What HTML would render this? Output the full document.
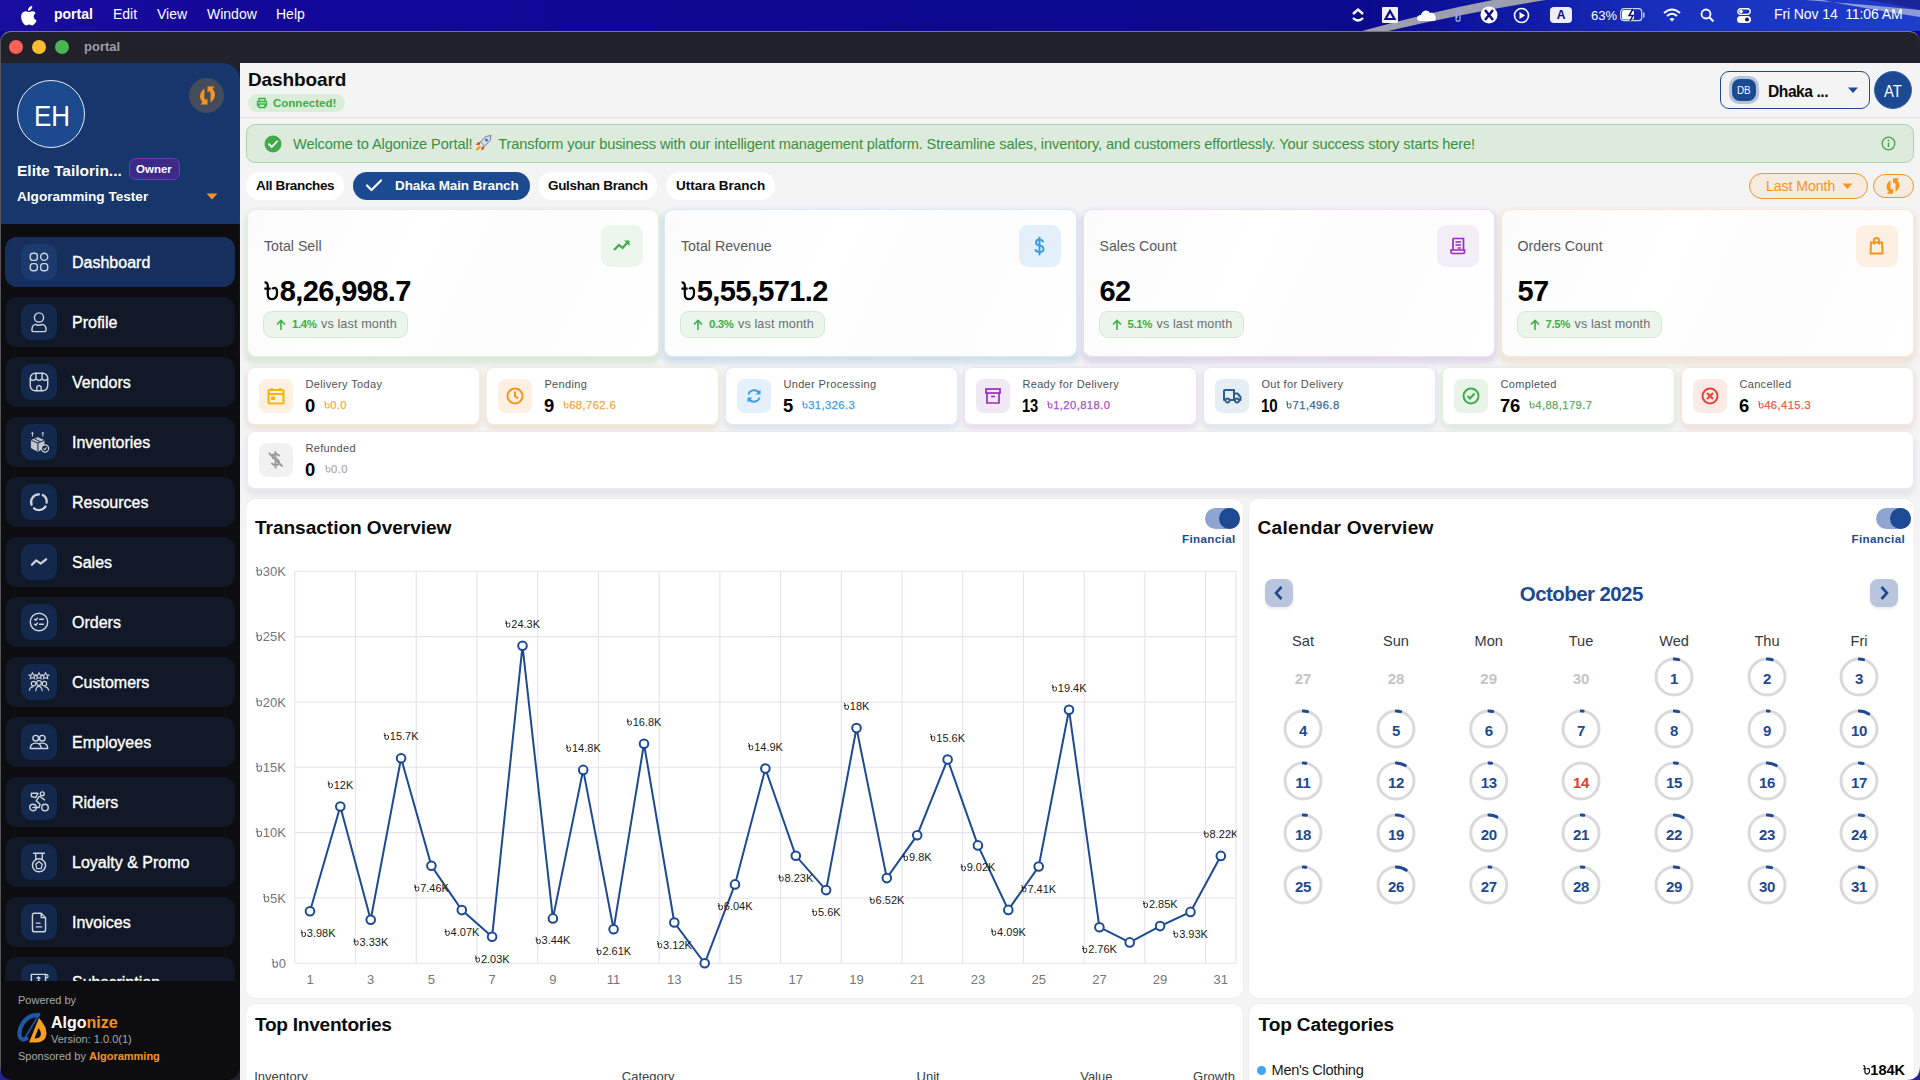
<!DOCTYPE html>
<html><head><meta charset="utf-8"><title>portal</title>
<style>
*{box-sizing:border-box;margin:0;padding:0}
html,body{width:1920px;height:1080px;overflow:hidden;font-family:"Liberation Sans",sans-serif;background:#10088c}
#root{position:relative;width:1920px;height:1080px;overflow:hidden;background:#10088c}
#root div,#root span,#root svg{position:absolute}
.nw{white-space:nowrap}
.b{font-weight:700}
.mb-t{top:6px;font-size:14px;color:#fff;white-space:nowrap;line-height:17px}
.tl{top:40px;width:14px;height:14px;border-radius:50%}
.mi{left:4px;width:230px;height:50px;border-radius:12px;background:#111827}
.mi.act{background:#172f5c}
.mi .ib{left:16px;top:7px;width:36px;height:36px;border-radius:10px;background:#12284d}
.mi.act .ib{background:#1b3a6e}
.mi .lb{left:67px;top:16px;font-size:16px;line-height:19px;color:#fff;white-space:nowrap;-webkit-text-stroke:0.35px #fff}
.mi svg{left:8px;top:8px}

</style></head><body>
<div id="root">
<div style="left:0;top:0;width:1920px;height:31px;background:linear-gradient(90deg,#1a0e9e 0%,#13089a 10%,#0d0890 50%,#0b0a8e 71%,#0f1aa3 79%,#1830bd 87%,#1d3ecb 100%)"></div>
<svg style="left:1340px;top:0" width="580" height="31" viewBox="0 0 580 31"><path d="M22 31 Q90 12 158 -1 L212 -1 Q125 13 48 31 Z" fill="#9d9fae"/><path d="M452 -1 Q520 4 580 10 L580 17 Q515 7 478 -1 Z" fill="#8f9ad6"/><path d="M520 -1 L580 -1 L580 10 Q550 3 520 -1Z" fill="#1c2596"/></svg>
<svg style="left:19px;top:6px" width="18" height="20" viewBox="0 0 18 20"><path d="M12.2 3.2c.8-1 1.3-2.2 1.1-3.4-1.1.1-2.4.7-3.2 1.7-.7.8-1.3 2-1.1 3.2 1.2.1 2.4-.6 3.2-1.5zM14.7 10.6c0-2.3 1.9-3.4 2-3.5-1.1-1.6-2.8-1.8-3.4-1.8-1.4-.1-2.8.8-3.5.8-.7 0-1.8-.8-3-.8C5.2 5.3 3.7 6.2 2.9 7.6 1.2 10.5 2.5 14.8 4.1 17.1c.8 1.1 1.7 2.4 3 2.3 1.2 0 1.6-.8 3.1-.8 1.4 0 1.8.8 3.1.8 1.3 0 2.1-1.1 2.9-2.3.9-1.3 1.3-2.6 1.3-2.7-.1 0-2.7-1-2.8-3.8z" fill="#fff"/></svg>
<span class="mb-t b" style="left:54px">portal</span>
<span class="mb-t" style="left:113px">Edit</span>
<span class="mb-t" style="left:157px">View</span>
<span class="mb-t" style="left:207px">Window</span>
<span class="mb-t" style="left:276px">Help</span>
<span class="mb-t" style="left:1591px;font-size:13px;top:7px">63%</span>
<span class="mb-t" style="left:1774px;font-size:14px;letter-spacing:-0.1px">Fri Nov 14&nbsp;&nbsp;11:06 AM</span>
<!-- status icons -->
<svg style="left:1351px;top:7px" width="14" height="17" viewBox="0 0 14 17"><path d="M2 7 L7 2.5 L12 7" stroke="#fff" stroke-width="2.4" fill="none"/><path d="M2 11 Q7 16 12 11" stroke="#fff" stroke-width="2.4" fill="none"/></svg>
<div style="left:1382px;top:7px;width:16px;height:16px;background:#f2f2f2;border-radius:1px"></div>
<svg style="left:1382px;top:7px" width="16" height="16" viewBox="0 0 16 16"><path d="M8 4 L12.5 12 L3.5 12 Z" fill="none" stroke="#10088c" stroke-width="2.2"/></svg>
<svg style="left:1417px;top:8px" width="20" height="14" viewBox="0 0 20 14"><path d="M3 13 C-1 13 -1 7 4 7 C5 2 11 1 13 5 C17 4 20 8 18 13 Z" fill="#fff"/></svg>
<svg style="left:1453px;top:7px" width="10" height="17" viewBox="0 0 10 17"><path d="M3 5 L3 12 C3 15 7 15 7 12 L7 3 C7 1 4 1 4 3 L4 11" stroke="#9aa3e0" stroke-width="1.3" fill="none"/></svg>
<svg style="left:1480px;top:6px" width="18" height="18" viewBox="0 0 18 18"><circle cx="9" cy="9" r="8.5" fill="#fff"/><path d="M5 4 L13 14 M13 4 L5 14" stroke="#10088c" stroke-width="2.4"/></svg>
<svg style="left:1513px;top:7px" width="17" height="17" viewBox="0 0 17 17"><circle cx="8.5" cy="8.5" r="7" stroke="#fff" stroke-width="1.6" fill="none"/><path d="M6.5 5 L12 8.5 L6.5 12 Z" fill="#fff"/></svg>
<div style="left:1550px;top:7px;width:22px;height:16px;background:#eeeef6;border-radius:4px;color:#10088c;font-size:12px;font-weight:700;text-align:center;line-height:16px">A</div>
<svg style="left:1620px;top:8px" width="26" height="14" viewBox="0 0 26 14"><rect x="0.7" y="0.7" width="21" height="12" rx="3" stroke="#fff" stroke-width="1.2" fill="none" opacity="0.8"/><rect x="2" y="2" width="12" height="9.5" rx="1.5" fill="#fff"/><path d="M13 1 L9 7.5 L13 7.5 L10 13" stroke="#10088c" stroke-width="1.5" fill="#fff"/><rect x="23" y="4.5" width="1.6" height="5" fill="#fff" opacity="0.7"/></svg>
<svg style="left:1663px;top:8px" width="18" height="14" viewBox="0 0 18 14"><path d="M1 5 Q9 -2 17 5" stroke="#fff" stroke-width="2" fill="none"/><path d="M4 8 Q9 3.5 14 8" stroke="#fff" stroke-width="2" fill="none"/><path d="M6.5 11 L9 13.5 L11.5 11 Q9 9 6.5 11Z" fill="#fff"/></svg>
<svg style="left:1700px;top:8px" width="15" height="15" viewBox="0 0 15 15"><circle cx="6" cy="6" r="4.5" stroke="#fff" stroke-width="1.8" fill="none"/><path d="M9.5 9.5 L13.5 13.5" stroke="#fff" stroke-width="2"/></svg>
<svg style="left:1737px;top:8px" width="14" height="15" viewBox="0 0 14 15"><rect x="0.8" y="0.8" width="12.4" height="5.6" rx="2.8" stroke="#fff" stroke-width="1.4" fill="none"/><circle cx="4" cy="3.6" r="1.8" fill="#fff"/><rect x="0" y="8" width="14" height="7" rx="3.5" fill="#fff"/><circle cx="10" cy="11.5" r="2" fill="#10088c"/></svg>
<!-- window -->
<div style="left:0;top:31px;width:1920px;height:1049px;border-radius:11px;background:#20212b;border-top:1px solid #77777c;border-left:1px solid #55555a;overflow:hidden"></div>
<div class="tl" style="left:9px;background:#fe5f57"></div>
<div class="tl" style="left:32px;background:#febc2e"></div>
<div class="tl" style="left:55px;background:#4bb34f"></div>
<span class="nw b" style="left:84px;top:39px;font-size:13px;color:#9d9da3;line-height:16px">portal</span>
<div style="left:1px;top:63px;width:239px;height:1017px;background:#0d0d10;border-radius:0 16px 14px 0;overflow:hidden">
<div style="left:0;top:0;width:239px;height:160.8px;background:#17366b;border-radius:0 16px 0 0"></div>
<div style="left:16px;top:17px;width:68px;height:68px;border-radius:50%;background:#1b4a8f;border:1.5px solid #e8ecf4"></div>
<span class="nw" style="left:32.5px;top:37.5px;font-size:29.5px;line-height:30px;color:#fff;transform:scaleX(0.88);transform-origin:0 0">EH</span>
<div style="left:188px;top:15px;width:35px;height:35px;border-radius:50%;background:#444b5a"></div>
<svg style="left:196px;top:22px" width="21" height="21" viewBox="0 0 21 21"><path d="M10.5 1.5 L17.5 1.5 L15.5 4 Q19 7.5 17.5 12.5 Q16.5 15.5 13.5 17.5 L13.5 11 Q14.5 8 12 6 L10.5 7.5Z" fill="#f7941d"/><path d="M10.5 19.5 L3.5 19.5 L5.5 17 Q2 13.5 3.5 8.5 Q4.5 5.5 7.5 3.5 L7.5 10 Q6.5 13 9 15 L10.5 13.5Z" fill="#f7941d"/></svg>
<span class="nw b" style="left:16px;top:99px;font-size:15.5px;line-height:18px;color:#fff">Elite Tailorin...</span>
<div style="left:128px;top:95px;width:51px;height:22px;border-radius:7px;background:#3d2a87;border:1.5px solid #7a33c4"></div>
<span class="nw b" style="left:135px;top:100px;font-size:11.5px;line-height:13px;color:#fff">Owner</span>
<span class="nw b" style="left:16px;top:125px;font-size:13.6px;line-height:17px;color:#fff">Algoramming Tester</span>
<svg style="left:205px;top:130px" width="12" height="7" viewBox="0 0 12 7"><path d="M0.5 0.5 L11.5 0.5 L6 6.5Z" fill="#f7941d"/></svg>
<div class="mi act" style="top:174px"><div class="ib"></div><svg style="left:22px;top:13px" width="24" height="24" viewBox="0 0 22 22"><g stroke-width="1.3"><rect x="3" y="3" width="6.5" height="6.5" rx="2.5" stroke="#cfd2da" fill="none" stroke-linecap="round" stroke-linejoin="round"/><rect x="12.5" y="3" width="6.5" height="6.5" rx="3.25" stroke="#cfd2da" fill="none" stroke-linecap="round" stroke-linejoin="round"/><rect x="3" y="12.5" width="6.5" height="6.5" rx="2.5" stroke="#cfd2da" fill="none" stroke-linecap="round" stroke-linejoin="round"/><rect x="12.5" y="12.5" width="6.5" height="6.5" rx="2.5" stroke="#cfd2da" fill="none" stroke-linecap="round" stroke-linejoin="round"/></g></svg><span class="lb">Dashboard</span></div>
<div class="mi" style="top:234px"><div class="ib"></div><svg style="left:22px;top:13px" width="24" height="24" viewBox="0 0 22 22"><g stroke-width="1.3"><circle cx="11" cy="6.8" r="4.2" stroke="#cfd2da" fill="none" stroke-linecap="round" stroke-linejoin="round"/><path d="M4.5 18.3 Q4.5 13.8 7.8 13.2 Q11 14.8 14.2 13.2 Q17.5 13.8 17.5 18.3 Q17.5 19.8 16 19.8 L6 19.8 Q4.5 19.8 4.5 18.3Z" stroke="#cfd2da" fill="none" stroke-linecap="round" stroke-linejoin="round"/></g></svg><span class="lb">Profile</span></div>
<div class="mi" style="top:294px"><div class="ib"></div><svg style="left:22px;top:13px" width="24" height="24" viewBox="0 0 22 22"><g stroke-width="1.3"><rect x="3" y="3" width="16" height="16" rx="4.5" stroke="#cfd2da" fill="none" stroke-linecap="round" stroke-linejoin="round"/><path d="M8.2 3 L8.2 8 M13.8 3 L13.8 8 M3 8 Q5.6 11 8.2 8 Q11 11 13.8 8 Q16.4 11 19 8 M9 19 L9 15.5 Q11 13 13 15.5 L13 19" stroke="#cfd2da" fill="none" stroke-linecap="round" stroke-linejoin="round"/></g></svg><span class="lb">Vendors</span></div>
<div class="mi" style="top:354px"><div class="ib"></div><svg style="left:22px;top:13px" width="24" height="24" viewBox="0 0 22 22"><g stroke-width="1.3"><path d="M4 9.5 L10 7 L15.5 9.5 L15.5 16.5 L10 19.5 L4 16.5 Z" fill="#c3c6ce" stroke="#cfd2da" stroke-width="0.8"/><path d="M4 9.5 L10 12 L15.5 9.5 M10 12 L10 19.5 M7 8.2 L12.5 10.8" stroke="#12284d" stroke-width="0.9" fill="none"/><circle cx="16.5" cy="17" r="3.3" fill="#12284d" stroke="#cfd2da" stroke-width="1.1"/><path d="M15 17 L16.2 18.1 L18 16" stroke="#cfd2da" stroke-width="1" fill="none"/><path d="M5 6 L5 2.2 M3.9 3.2 L5 2.2 L6.1 3.2 M14.5 6 L14.5 2.2 M13.4 3.2 L14.5 2.2 L15.6 3.2" stroke="#cfd2da" stroke-width="0.9" fill="none"/></g></svg><span class="lb">Inventories</span></div>
<div class="mi" style="top:414px"><div class="ib"></div><svg style="left:22px;top:13px" width="24" height="24" viewBox="0 0 22 22"><g stroke-width="1.3"><path d="M14.5 4.6 A7 7 0 0 1 18 11.5" stroke="#cfd2da" fill="none" stroke-linecap="round" stroke-linejoin="round" stroke-width="2.1"/><path d="M17 15 A7 7 0 0 1 6.5 16.8" stroke="#cfd2da" fill="none" stroke-linecap="round" stroke-linejoin="round" stroke-width="2.1"/><path d="M4.2 13.5 A7 7 0 0 1 11 4" stroke="#cfd2da" fill="none" stroke-linecap="round" stroke-linejoin="round" stroke-width="2.1"/></g></svg><span class="lb">Resources</span></div>
<div class="mi" style="top:474px"><div class="ib"></div><svg style="left:22px;top:13px" width="24" height="24" viewBox="0 0 22 22"><g stroke-width="1.3"><path d="M4.5 13.5 L8.5 9.5 L12.5 12.5 L17.5 8.5" stroke="#cfd2da" fill="none" stroke-linecap="round" stroke-linejoin="round" stroke-width="2.1"/></g></svg><span class="lb">Sales</span></div>
<div class="mi" style="top:534px"><div class="ib"></div><svg style="left:22px;top:13px" width="24" height="24" viewBox="0 0 22 22"><g stroke-width="1.3"><circle cx="11" cy="11" r="8" stroke="#cfd2da" fill="none" stroke-linecap="round" stroke-linejoin="round"/><path d="M7 8.5 L8 9.5 L9.5 7.5 M7 13 L8 14 L9.5 12 M11.5 8.5 L15 8.5 M11.5 13 L15 13" stroke="#cfd2da" fill="none" stroke-linecap="round" stroke-linejoin="round" stroke-width="1.3"/></g></svg><span class="lb">Orders</span></div>
<div class="mi" style="top:594px"><div class="ib"></div><svg style="left:22px;top:13px" width="24" height="24" viewBox="0 0 22 22"><g stroke-width="1.3"><path d="M5 2.5 L6 4.5 L8 4.7 L6.5 6 L7 8 L5 7 L3 8 L3.5 6 L2 4.7 L4 4.5Z M11 2.5 L12 4.5 L14 4.7 L12.5 6 L13 8 L11 7 L9 8 L9.5 6 L8 4.7 L10 4.5Z M17 2.5 L18 4.5 L20 4.7 L18.5 6 L19 8 L17 7 L15 8 L15.5 6 L14 4.7 L16 4.5Z" stroke="#cfd2da" stroke-width="1" fill="none"/><circle cx="6" cy="12.5" r="2" stroke="#cfd2da" fill="none" stroke-linecap="round" stroke-linejoin="round" stroke-width="1.1"/><circle cx="11" cy="12" r="2.2" stroke="#cfd2da" fill="none" stroke-linecap="round" stroke-linejoin="round" stroke-width="1.1"/><circle cx="16" cy="12.5" r="2" stroke="#cfd2da" fill="none" stroke-linecap="round" stroke-linejoin="round" stroke-width="1.1"/><path d="M2 19 Q3 15 6 15.5 M8 19.5 Q8.5 15 11 15 Q13.5 15 14 19.5 M20 19 Q19 15 16 15.5" stroke="#cfd2da" stroke-width="1.1" fill="none"/></g></svg><span class="lb">Customers</span></div>
<div class="mi" style="top:654px"><div class="ib"></div><svg style="left:22px;top:13px" width="24" height="24" viewBox="0 0 22 22"><g stroke-width="1.3"><circle cx="8" cy="7.5" r="2.6" stroke="#cfd2da" fill="none" stroke-linecap="round" stroke-linejoin="round" stroke-width="1.3"/><circle cx="14" cy="7.5" r="2.6" stroke="#cfd2da" fill="none" stroke-linecap="round" stroke-linejoin="round" stroke-width="1.3"/><path d="M3 17 Q3 12 8 12 Q13 12 13 17Z M11 12.3 Q12.5 12 14 12 Q19 12 19 17 L13 17" stroke="#cfd2da" fill="none" stroke-linecap="round" stroke-linejoin="round" stroke-width="1.3"/></g></svg><span class="lb">Employees</span></div>
<div class="mi" style="top:714px"><div class="ib"></div><svg style="left:22px;top:13px" width="24" height="24" viewBox="0 0 22 22"><g stroke-width="1.3"><circle cx="5.5" cy="16" r="3" stroke="#cfd2da" fill="none" stroke-linecap="round" stroke-linejoin="round" stroke-width="1.3"/><circle cx="16.5" cy="16" r="3" stroke="#cfd2da" fill="none" stroke-linecap="round" stroke-linejoin="round" stroke-width="1.3"/><circle cx="14" cy="3.5" r="1.8" stroke="#cfd2da" fill="none" stroke-linecap="round" stroke-linejoin="round" stroke-width="1.3"/><path d="M4 3 L10 3 L8 7 L4 6Z M12 6 L16 9 M11 6 L8.5 10 L12 13 L11 16 M5.5 16 L11 16" stroke="#cfd2da" fill="none" stroke-linecap="round" stroke-linejoin="round" stroke-width="1.3"/></g></svg><span class="lb">Riders</span></div>
<div class="mi" style="top:774px"><div class="ib"></div><svg style="left:22px;top:13px" width="24" height="24" viewBox="0 0 22 22"><g stroke-width="1.3"><path d="M6 3 L16 3 M8 3 L8 8 M14 3 L14 8" stroke="#cfd2da" fill="none" stroke-linecap="round" stroke-linejoin="round" stroke-width="1.3"/><circle cx="11" cy="14" r="6" stroke="#cfd2da" fill="none" stroke-linecap="round" stroke-linejoin="round" stroke-width="1.3"/><path d="M11 10.5 L14 13 L13 17 L9 17 L8 13Z" stroke="#cfd2da" fill="none" stroke-linecap="round" stroke-linejoin="round" stroke-width="1.2"/></g></svg><span class="lb">Loyalty & Promo</span></div>
<div class="mi" style="top:834px"><div class="ib"></div><svg style="left:22px;top:13px" width="24" height="24" viewBox="0 0 22 22"><g stroke-width="1.3"><path d="M6 3 L13 3 L17 7 L17 18 Q17 20 15 20 L7 20 Q5 20 5 18 L5 5 Q5 3 7 3Z M13 3 L13 7 L17 7 M8.5 12 L12 12 M8.5 15.5 L13.5 15.5" stroke="#cfd2da" fill="none" stroke-linecap="round" stroke-linejoin="round" stroke-width="1.3"/></g></svg><span class="lb">Invoices</span></div>
<div class="mi" style="top:894px"><div class="ib"></div><svg style="left:22px;top:13px" width="24" height="24" viewBox="0 0 22 22"><g stroke-width="1.3"><rect x="4" y="4" width="13" height="15" stroke="#cfd2da" fill="none" stroke-linecap="round" stroke-linejoin="round" stroke-width="1.3"/><path d="M17 4 Q20 4 19 7 L17 7 M6 16 L15 16 M10.5 6 L10.5 12 M9 7.5 Q10.5 6 12 7.5 Q9 9 12 10.5 Q10.5 12 9 10.5" stroke="#cfd2da" fill="none" stroke-linecap="round" stroke-linejoin="round" stroke-width="1.1"/></g></svg><span class="lb">Subscription</span></div>
<div style="left:0;top:918px;width:239px;height:99px;background:#0d0d10"></div>
<span class="nw" style="left:17px;top:931px;font-size:11px;line-height:13px;color:#a8a8ad">Powered by</span>
<svg style="left:14px;top:949px" width="34" height="32" viewBox="0 0 34 32"><path d="M23 3.2 Q14 2.5 8 11 Q3 19 5 25 Q7 29 11.5 26.5" stroke="#2156a8" stroke-width="4.2" fill="none" stroke-linecap="round"/><path d="M8 29 L25 1" stroke="#2156a8" stroke-width="1.6"/><path fill-rule="evenodd" d="M14 30.5 L24 6 Q32 15 31.5 22 Q30.5 30.5 21 30.5 Z M19.5 26.5 L23.5 16 Q26.5 20 25.8 23 Q25 26.5 19.5 26.5 Z" fill="#f7a01f"/></svg>
<span class="nw b" style="left:50px;top:951px;font-size:16px;line-height:18px;color:#fff">Algo<span style="position:static;color:#f7941d">nize</span></span>
<span class="nw" style="left:50px;top:970px;font-size:11px;line-height:13px;color:#a8a8ad">Version: 1.0.0(1)</span>
<span class="nw" style="left:17px;top:987px;font-size:11px;line-height:13px;color:#a8a8ad">Sponsored by <span style="position:static;color:#f7941d;font-weight:700">Algoramming</span></span>
</div><div style="left:240px;top:63px;width:1680px;height:1017px;background:#f4f4f5"></div>
<div style="left:240px;top:117px;width:1680px;height:1px;background:#e2e2e4"></div>
<span class="nw b" style="left:248px;top:68.8px;font-size:19px;line-height:22px;color:#0a0a0a;letter-spacing:-0.1px">Dashboard</span>
<div style="left:248px;top:94px;width:97px;height:18px;border-radius:9px;background:#d9edd9"></div>
<svg style="left:256px;top:97px" width="12" height="12" viewBox="0 0 12 12"><path d="M3 4 L3 1.5 L9 1.5 L9 4 M3 8.5 L1.5 8.5 L1.5 4.5 L10.5 4.5 L10.5 8.5 L9 8.5 M3 7 L9 7 L9 10.5 L3 10.5Z" stroke="#3cae47" stroke-width="1.3" fill="none"/></svg>
<span class="nw b" style="left:273px;top:97px;font-size:11.5px;line-height:13px;color:#3cae47">Connected!</span>
<!-- right header -->
<div style="left:1720px;top:71px;width:150px;height:38px;border-radius:9px;border:1.5px solid #1d4a92;background:#f4f4f5"></div>
<div style="left:1729px;top:76px;width:30px;height:28px;border-radius:10px;background:#b6c3db"></div>
<div style="left:1732px;top:79px;width:24px;height:22px;border-radius:8px;background:#1b4a92"></div>
<span class="nw" style="left:1737px;top:84px;font-size:11px;line-height:12px;color:#fff;letter-spacing:-0.3px;transform:scaleX(0.9);transform-origin:0 0">DB</span>
<span class="nw b" style="left:1768px;top:82.5px;font-size:15.6px;line-height:18px;color:#0a0a0a;letter-spacing:-0.45px">Dhaka ...</span>
<svg style="left:1847px;top:87px" width="12" height="7" viewBox="0 0 12 7"><path d="M1 0.5 L11 0.5 L6 6Z" fill="#1d4a92"/></svg>
<div style="left:1874px;top:71px;width:38px;height:38px;border-radius:50%;background:#1b4a92;border:1px solid #3a64a8"></div>
<span class="nw" style="left:1884px;top:81.5px;font-size:16.5px;line-height:19px;color:#fff;transform:scaleX(0.9);transform-origin:0 0">AT</span>
<!-- banner -->
<div style="left:246px;top:124px;width:1668px;height:39px;border-radius:9px;background:#dcebdc;border:1px solid #a9d6aa"></div>
<svg style="left:264px;top:135px" width="18" height="18" viewBox="0 0 18 18"><circle cx="9" cy="9" r="8.5" fill="#43a94c"/><path d="M5 9.2 L7.8 12 L13 6.5" stroke="#fff" stroke-width="1.8" fill="none" stroke-linecap="round" stroke-linejoin="round"/></svg>
<span class="nw" style="left:293px;top:136px;font-size:14.6px;line-height:17px;color:#3b8f3f;letter-spacing:-0.1px">Welcome to Algonize Portal! <span style="position:static;display:inline-block;width:18px"></span> Transform your business with our intelligent management platform. Streamline sales, inventory, and customers effortlessly. Your success story starts here!</span>
<svg style="left:474px;top:134px" width="19" height="19" viewBox="0 0 19 19"><path d="M17 1.5 Q12 1 8 6 L6.5 8 L10.5 12 L12.5 10.5 Q17.5 6.5 17 1.5Z" fill="#d8dbe6" stroke="#5a6482" stroke-width="0.8"/><circle cx="12.5" cy="6" r="1.6" fill="#3d7bd6"/><path d="M6.5 8 L3.5 8.5 L2 11 L5.5 11 Z M10.5 12 L10 15 L7.5 16.5 L7.5 13Z" fill="#e0453a"/><path d="M5.5 11.5 Q2.5 13 1.5 17 Q5.5 16 7 13Z" fill="#f7a21b"/></svg>
<svg style="left:1881px;top:136px" width="15" height="15" viewBox="0 0 15 15"><circle cx="7.5" cy="7.5" r="6.3" stroke="#4aa050" stroke-width="1.3" fill="none"/><path d="M7.5 6.5 L7.5 11" stroke="#4aa050" stroke-width="1.4"/><circle cx="7.5" cy="4.3" r="0.9" fill="#4aa050"/></svg>
<!-- tabs -->
<div style="left:246px;top:172px;width:98px;height:28px;border-radius:14px;background:#fff"></div>
<span class="nw b" style="left:256px;top:178px;font-size:13.5px;line-height:16px;color:#0a0a0a;letter-spacing:-0.36px">All Branches</span>
<div style="left:353px;top:172px;width:177px;height:28px;border-radius:14px;background:#1b4a92"></div>
<svg style="left:365px;top:178px" width="18" height="15" viewBox="0 0 18 15"><path d="M2 7.5 L6.5 12 L16 2.5" stroke="#fff" stroke-width="2.2" fill="none" stroke-linecap="round" stroke-linejoin="round"/></svg>
<span class="nw b" style="left:395px;top:178px;font-size:13.5px;line-height:16px;color:#fff;letter-spacing:-0.1px">Dhaka Main Branch</span>
<div style="left:538px;top:172px;width:119px;height:28px;border-radius:14px;background:#fff"></div>
<span class="nw b" style="left:548px;top:178px;font-size:13.5px;line-height:16px;color:#0a0a0a;letter-spacing:-0.32px">Gulshan Branch</span>
<div style="left:666px;top:172px;width:109px;height:28px;border-radius:14px;background:#fff"></div>
<span class="nw b" style="left:676px;top:178px;font-size:13.5px;line-height:16px;color:#0a0a0a;letter-spacing:0px">Uttara Branch</span>
<div style="left:1749px;top:173px;width:119px;height:26px;border-radius:13px;background:#f6ebdf;border:1.2px solid #f7941d"></div>
<span class="nw" style="left:1766px;top:178px;font-size:14px;line-height:16px;color:#f7941d">Last Month</span>
<svg style="left:1842px;top:183px" width="11" height="7" viewBox="0 0 11 7"><path d="M0.5 0.5 L10.5 0.5 L5.5 6Z" fill="#f7941d"/></svg>
<div style="left:1873px;top:174px;width:41px;height:24px;border-radius:12px;background:#f6ebdf;border:1.2px solid #f7941d"></div>
<svg style="left:1884px;top:177px" width="18" height="18" viewBox="0 0 21 21"><path d="M10.5 1.5 L17.5 1.5 L15.5 4 Q19 7.5 17.5 12.5 Q16.5 15.5 13.5 17.5 L13.5 11 Q14.5 8 12 6 L10.5 7.5Z" fill="#f7941d"/><path d="M10.5 19.5 L3.5 19.5 L5.5 17 Q2 13.5 3.5 8.5 Q4.5 5.5 7.5 3.5 L7.5 10 Q6.5 13 9 15 L10.5 13.5Z" fill="#f7941d"/></svg>
<div style="left:247px;top:208.5px;width:412px;height:148.5px;border-radius:9px;box-shadow:0 4px 5px 3px #dbe9db"></div>
<div style="left:664px;top:208.5px;width:413px;height:148.5px;border-radius:9px;box-shadow:0 4px 5px 3px #d3e0eb"></div>
<div style="left:1082.5px;top:208.5px;width:412.5px;height:148.5px;border-radius:9px;box-shadow:0 4px 5px 3px #e0d9ea"></div>
<div style="left:1500.5px;top:208.5px;width:413.0px;height:148.5px;border-radius:9px;box-shadow:0 4px 5px 3px #efe4d8"></div>
<div style="left:247px;top:208.5px;width:412px;height:148.5px;border-radius:9px;background:linear-gradient(115deg,#fbfbfb 0%,#fff 40%,#fcfcfc 60%,#fff 100%);border:1px solid #e2efe2"></div>
<span class="nw" style="left:264.00px;top:238.78px;font-size:14.2px;line-height:14.2px;color:#555a60;">Total Sell</span>
<span class="nw" style="left:264.00px;top:276.65px;font-size:29px;line-height:29px;color:#000;font-weight:700;letter-spacing:-0.6px;"><svg style="position:static;display:inline-block;vertical-align:baseline;margin-left:0px;margin-right:1px;overflow:visible" width="14.65" height="19.53" viewBox="0 0 15 20"><path d="M0.6 1.4 Q3.9 1.2 3.9 5 L3.9 13.5 Q3.9 18.6 8.2 18.6 Q13.4 18.6 13.4 11.5 Q13.4 7 10.6 7 Q9.2 7 8.4 8.3 M0.4 7.8 L6.8 7.8" stroke="#000" stroke-width="2.3" fill="none"/></svg>8,26,998.7</span>
<div style="left:263px;top:310.5px;width:145px;height:27px;border-radius:9px;background:#ebf5eb;border:1px solid #d2e9d2"></div>
<svg style="left:276px;top:318.5px" width="10" height="12" viewBox="0 0 10 12"><path d="M5 11 L5 1.5 M1 5.5 L5 1.5 L9 5.5" stroke="#3fae4a" stroke-width="1.6" fill="none"/></svg>
<span class="nw" style="left:292.00px;top:319.35px;font-size:11.4px;line-height:11.4px;color:#3fae4a;font-weight:700;letter-spacing:-0.35px;">1.4%</span>
<span class="nw" style="left:321.00px;top:318.33px;font-size:12.6px;line-height:12.6px;color:#6b6f75;letter-spacing:0.12px;">vs last month</span>
<div style="left:601px;top:225px;width:42px;height:42px;border-radius:9px;background:#ecf6ec"></div>
<svg style="left:611px;top:235px" width="22" height="22" viewBox="0 0 22 22"><path d="M3 15 L8 10 L11.5 13 L17 7" stroke="#3fae4a" stroke-width="2.3" fill="none" stroke-linejoin="miter"/><path d="M13 5.5 L18.5 5.5 L18.5 11Z" fill="#3fae4a"/></svg>
<div style="left:664px;top:208.5px;width:413px;height:148.5px;border-radius:9px;background:linear-gradient(115deg,#fbfbfb 0%,#fff 40%,#fcfcfc 60%,#fff 100%);border:1px solid #dde8f2"></div>
<span class="nw" style="left:681.00px;top:238.78px;font-size:14.2px;line-height:14.2px;color:#555a60;">Total Revenue</span>
<span class="nw" style="left:681.00px;top:276.65px;font-size:29px;line-height:29px;color:#000;font-weight:700;letter-spacing:-0.6px;"><svg style="position:static;display:inline-block;vertical-align:baseline;margin-left:0px;margin-right:1px;overflow:visible" width="14.65" height="19.53" viewBox="0 0 15 20"><path d="M0.6 1.4 Q3.9 1.2 3.9 5 L3.9 13.5 Q3.9 18.6 8.2 18.6 Q13.4 18.6 13.4 11.5 Q13.4 7 10.6 7 Q9.2 7 8.4 8.3 M0.4 7.8 L6.8 7.8" stroke="#000" stroke-width="2.3" fill="none"/></svg>5,55,571.2</span>
<div style="left:680px;top:310.5px;width:145px;height:27px;border-radius:9px;background:#ebf5eb;border:1px solid #d2e9d2"></div>
<svg style="left:693px;top:318.5px" width="10" height="12" viewBox="0 0 10 12"><path d="M5 11 L5 1.5 M1 5.5 L5 1.5 L9 5.5" stroke="#3fae4a" stroke-width="1.6" fill="none"/></svg>
<span class="nw" style="left:709.00px;top:319.35px;font-size:11.4px;line-height:11.4px;color:#3fae4a;font-weight:700;letter-spacing:-0.35px;">0.3%</span>
<span class="nw" style="left:738.00px;top:318.33px;font-size:12.6px;line-height:12.6px;color:#6b6f75;letter-spacing:0.12px;">vs last month</span>
<div style="left:1019px;top:225px;width:42px;height:42px;border-radius:9px;background:#e3f0fb"></div>
<svg style="left:1029px;top:235px" width="22" height="22" viewBox="0 0 22 22"><path d="M14 6.5 Q13 4.5 10.5 4.5 Q7 4.5 7 7.5 Q7 10 10.5 10.5 Q14.5 11 14.5 14 Q14.5 17 10.5 17 Q7.5 17 6.5 15 M10.5 2.5 L10.5 19.5" stroke="#3b9de8" stroke-width="2" fill="none" stroke-linecap="round"/></svg>
<div style="left:1082.5px;top:208.5px;width:412.5px;height:148.5px;border-radius:9px;background:linear-gradient(115deg,#fbfbfb 0%,#fff 40%,#fcfcfc 60%,#fff 100%);border:1px solid #e9e2f1"></div>
<span class="nw" style="left:1099.50px;top:238.78px;font-size:14.2px;line-height:14.2px;color:#555a60;">Sales Count</span>
<span class="nw" style="left:1099.50px;top:276.65px;font-size:29px;line-height:29px;color:#000;font-weight:700;letter-spacing:-0.6px;">62</span>
<div style="left:1098.5px;top:310.5px;width:145px;height:27px;border-radius:9px;background:#ebf5eb;border:1px solid #d2e9d2"></div>
<svg style="left:1111.5px;top:318.5px" width="10" height="12" viewBox="0 0 10 12"><path d="M5 11 L5 1.5 M1 5.5 L5 1.5 L9 5.5" stroke="#3fae4a" stroke-width="1.6" fill="none"/></svg>
<span class="nw" style="left:1127.50px;top:319.35px;font-size:11.4px;line-height:11.4px;color:#3fae4a;font-weight:700;letter-spacing:-0.35px;">5.1%</span>
<span class="nw" style="left:1156.50px;top:318.33px;font-size:12.6px;line-height:12.6px;color:#6b6f75;letter-spacing:0.12px;">vs last month</span>
<div style="left:1437px;top:225px;width:42px;height:42px;border-radius:9px;background:#f2edf6"></div>
<svg style="left:1447px;top:235px" width="22" height="22" viewBox="0 0 22 22"><path d="M6 3.5 L16.5 3.5 L16.5 15 M6 3.5 L6 15 M8.5 7 L14 7 M8.5 10 L14 10 M10.5 13 L14 13 M4 15 L17.5 15 L17.5 17 Q17.5 18.5 16 18.5 L5.5 18.5 Q4 18.5 4 17Z" stroke="#9b2bbf" stroke-width="1.7" fill="none"/></svg>
<div style="left:1500.5px;top:208.5px;width:413.0px;height:148.5px;border-radius:9px;background:linear-gradient(115deg,#fbfbfb 0%,#fff 40%,#fcfcfc 60%,#fff 100%);border:1px solid #f6e9da"></div>
<span class="nw" style="left:1517.50px;top:238.78px;font-size:14.2px;line-height:14.2px;color:#555a60;">Orders Count</span>
<span class="nw" style="left:1517.50px;top:276.65px;font-size:29px;line-height:29px;color:#000;font-weight:700;letter-spacing:-0.6px;">57</span>
<div style="left:1516.5px;top:310.5px;width:145px;height:27px;border-radius:9px;background:#ebf5eb;border:1px solid #d2e9d2"></div>
<svg style="left:1529.5px;top:318.5px" width="10" height="12" viewBox="0 0 10 12"><path d="M5 11 L5 1.5 M1 5.5 L5 1.5 L9 5.5" stroke="#3fae4a" stroke-width="1.6" fill="none"/></svg>
<span class="nw" style="left:1545.50px;top:319.35px;font-size:11.4px;line-height:11.4px;color:#3fae4a;font-weight:700;letter-spacing:-0.35px;">7.5%</span>
<span class="nw" style="left:1574.50px;top:318.33px;font-size:12.6px;line-height:12.6px;color:#6b6f75;letter-spacing:0.12px;">vs last month</span>
<div style="left:1855.5px;top:225px;width:42px;height:42px;border-radius:9px;background:#fdf0e2"></div>
<svg style="left:1865.5px;top:235px" width="22" height="22" viewBox="0 0 22 22"><path d="M5 7.5 L16 7.5 L16.5 18.5 L4.5 18.5Z" stroke="#f7941d" stroke-width="2" fill="none"/><path d="M8 9.5 L8 5.5 Q8 3 10.5 3 Q13 3 13 5.5 L13 9.5" stroke="#f7941d" stroke-width="2" fill="none"/></svg>
<div style="left:247px;top:366.5px;width:232.5px;height:58.5px;border-radius:8px;box-shadow:0 3px 4px 2px #ede4da"></div>
<div style="left:486px;top:366.5px;width:232.5px;height:58.5px;border-radius:8px;box-shadow:0 3px 4px 2px #ede4da"></div>
<div style="left:725px;top:366.5px;width:232.5px;height:58.5px;border-radius:8px;box-shadow:0 3px 4px 2px #dde6ee"></div>
<div style="left:964px;top:366.5px;width:232.5px;height:58.5px;border-radius:8px;box-shadow:0 3px 4px 2px #e6e0ec"></div>
<div style="left:1203px;top:366.5px;width:232.5px;height:58.5px;border-radius:8px;box-shadow:0 3px 4px 2px #dfe6ec"></div>
<div style="left:1442px;top:366.5px;width:232.5px;height:58.5px;border-radius:8px;box-shadow:0 3px 4px 2px #e0eadf"></div>
<div style="left:1681px;top:366.5px;width:232.5px;height:58.5px;border-radius:8px;box-shadow:0 3px 4px 2px #efe3de"></div>
<div style="left:247px;top:366.5px;width:232.5px;height:58.5px;border-radius:8px;background:#fff;border:1px solid #f6ebdd"></div>
<div style="left:259px;top:379px;width:34px;height:34px;border-radius:8px;background:#fdf0e1"></div>
<svg style="left:265px;top:385px" width="22" height="22" viewBox="0 0 22 22"><rect x="3.5" y="5" width="15" height="13.5" rx="1" stroke="#f9b40a" stroke-width="2.2" fill="none"/><path d="M3.5 9 L18.5 9 M7 3 L7 6 M15 3 L15 6" stroke="#f9b40a" stroke-width="2.2"/><rect x="6" y="11.5" width="4" height="3.5" fill="#f9b40a"/></svg>
<span class="nw" style="left:305.40px;top:379.19px;font-size:11px;line-height:11px;color:#4d5157;letter-spacing:0.35px;">Delivery Today</span>
<span class="nw" style="left:305.00px;top:396.72px;font-size:18.4px;line-height:18.4px;color:#000;font-weight:700;letter-spacing:-0.2px;transform:scaleX(1.0);transform-origin:0 0;">0</span>
<span class="nw" style="left:323.70px;top:399.72px;font-size:11.2px;line-height:11.2px;color:#f7a93b;letter-spacing:0.42px;-webkit-text-stroke:0.25px #f7a93b;"><svg style="position:static;display:inline-block;vertical-align:baseline;margin-left:0px;margin-right:0.8px;overflow:visible" width="5.72" height="7.63" viewBox="0 0 15 20"><path d="M0.6 1.4 Q3.9 1.2 3.9 5 L3.9 13.5 Q3.9 18.6 8.2 18.6 Q13.4 18.6 13.4 11.5 Q13.4 7 10.6 7 Q9.2 7 8.4 8.3 M0.4 7.8 L6.8 7.8" stroke="#f7a93b" stroke-width="2.7" fill="none"/></svg>0.0</span>
<div style="left:486px;top:366.5px;width:232.5px;height:58.5px;border-radius:8px;background:#fff;border:1px solid #f6ebdd"></div>
<div style="left:498px;top:379px;width:34px;height:34px;border-radius:8px;background:#fdf0e2"></div>
<svg style="left:504px;top:385px" width="22" height="22" viewBox="0 0 22 22"><circle cx="11" cy="11" r="7.5" stroke="#f7941d" stroke-width="2" fill="none"/><path d="M11 6.5 L11 11 L14 13.5" stroke="#f7941d" stroke-width="2" fill="none"/></svg>
<span class="nw" style="left:544.40px;top:379.19px;font-size:11px;line-height:11px;color:#4d5157;letter-spacing:0.35px;">Pending</span>
<span class="nw" style="left:544.00px;top:396.72px;font-size:18.4px;line-height:18.4px;color:#000;font-weight:700;letter-spacing:-0.2px;transform:scaleX(1.0);transform-origin:0 0;">9</span>
<span class="nw" style="left:562.70px;top:399.72px;font-size:11.2px;line-height:11.2px;color:#f7a63a;letter-spacing:0.42px;-webkit-text-stroke:0.25px #f7a63a;"><svg style="position:static;display:inline-block;vertical-align:baseline;margin-left:0px;margin-right:0.8px;overflow:visible" width="5.72" height="7.63" viewBox="0 0 15 20"><path d="M0.6 1.4 Q3.9 1.2 3.9 5 L3.9 13.5 Q3.9 18.6 8.2 18.6 Q13.4 18.6 13.4 11.5 Q13.4 7 10.6 7 Q9.2 7 8.4 8.3 M0.4 7.8 L6.8 7.8" stroke="#f7a63a" stroke-width="2.7" fill="none"/></svg>68,762.6</span>
<div style="left:725px;top:366.5px;width:232.5px;height:58.5px;border-radius:8px;background:#fff;border:1px solid #e1ebf4"></div>
<div style="left:737px;top:379px;width:34px;height:34px;border-radius:8px;background:#e4f0fa"></div>
<svg style="left:743px;top:385px" width="22" height="22" viewBox="0 0 22 22"><path d="M16.5 8.5 A6 6 0 0 0 5.5 9.5 M5.5 13.5 A6 6 0 0 0 16.5 12.5" stroke="#3b9de8" stroke-width="2" fill="none"/><path d="M17.5 4.5 L17.5 9.5 L12.5 9.5Z M4.5 17.5 L4.5 12.5 L9.5 12.5Z" fill="#3b9de8"/></svg>
<span class="nw" style="left:783.40px;top:379.19px;font-size:11px;line-height:11px;color:#4d5157;letter-spacing:0.35px;">Under Processing</span>
<span class="nw" style="left:783.00px;top:396.72px;font-size:18.4px;line-height:18.4px;color:#000;font-weight:700;letter-spacing:-0.2px;transform:scaleX(1.0);transform-origin:0 0;">5</span>
<span class="nw" style="left:801.70px;top:399.72px;font-size:11.2px;line-height:11.2px;color:#3b9de8;letter-spacing:0.42px;-webkit-text-stroke:0.25px #3b9de8;"><svg style="position:static;display:inline-block;vertical-align:baseline;margin-left:0px;margin-right:0.8px;overflow:visible" width="5.72" height="7.63" viewBox="0 0 15 20"><path d="M0.6 1.4 Q3.9 1.2 3.9 5 L3.9 13.5 Q3.9 18.6 8.2 18.6 Q13.4 18.6 13.4 11.5 Q13.4 7 10.6 7 Q9.2 7 8.4 8.3 M0.4 7.8 L6.8 7.8" stroke="#3b9de8" stroke-width="2.7" fill="none"/></svg>31,326.3</span>
<div style="left:964px;top:366.5px;width:232.5px;height:58.5px;border-radius:8px;background:#fff;border:1px solid #ebe4f0"></div>
<div style="left:976px;top:379px;width:34px;height:34px;border-radius:8px;background:#f0e8f3"></div>
<svg style="left:982px;top:385px" width="22" height="22" viewBox="0 0 22 22"><rect x="4" y="4" width="14" height="4" stroke="#9b2bbf" stroke-width="1.7" fill="none"/><path d="M5 8 L5 18 L17 18 L17 8 M9 11.5 L13 11.5" stroke="#9b2bbf" stroke-width="1.7" fill="none"/></svg>
<span class="nw" style="left:1022.40px;top:379.19px;font-size:11px;line-height:11px;color:#4d5157;letter-spacing:0.35px;">Ready for Delivery</span>
<span class="nw" style="left:1022.00px;top:396.72px;font-size:18.4px;line-height:18.4px;color:#000;font-weight:700;letter-spacing:-0.2px;transform:scaleX(0.8);transform-origin:0 0;">13</span>
<span class="nw" style="left:1046.70px;top:399.72px;font-size:11.2px;line-height:11.2px;color:#a352c4;letter-spacing:0.42px;-webkit-text-stroke:0.25px #a352c4;"><svg style="position:static;display:inline-block;vertical-align:baseline;margin-left:0px;margin-right:0.8px;overflow:visible" width="5.72" height="7.63" viewBox="0 0 15 20"><path d="M0.6 1.4 Q3.9 1.2 3.9 5 L3.9 13.5 Q3.9 18.6 8.2 18.6 Q13.4 18.6 13.4 11.5 Q13.4 7 10.6 7 Q9.2 7 8.4 8.3 M0.4 7.8 L6.8 7.8" stroke="#a352c4" stroke-width="2.7" fill="none"/></svg>1,20,818.0</span>
<div style="left:1203px;top:366.5px;width:232.5px;height:58.5px;border-radius:8px;background:#fff;border:1px solid #e2e9ef"></div>
<div style="left:1215px;top:379px;width:34px;height:34px;border-radius:8px;background:#e4eef4"></div>
<svg style="left:1221px;top:385px" width="22" height="22" viewBox="0 0 22 22"><path d="M3 6 Q3 5 4 5 L13 5 L13 15 L3 15 Z M13 8.5 L16.5 8.5 L19.5 12 L19.5 15 L13 15" fill="none" stroke="#2d5d8f" stroke-width="2" stroke-linejoin="round"/><circle cx="6.5" cy="15.5" r="2" fill="#e4eef4" stroke="#2d5d8f" stroke-width="1.8"/><circle cx="16" cy="15.5" r="2" fill="#e4eef4" stroke="#2d5d8f" stroke-width="1.8"/></svg>
<span class="nw" style="left:1261.40px;top:379.19px;font-size:11px;line-height:11px;color:#4d5157;letter-spacing:0.35px;">Out for Delivery</span>
<span class="nw" style="left:1261.00px;top:396.72px;font-size:18.4px;line-height:18.4px;color:#000;font-weight:700;letter-spacing:-0.2px;transform:scaleX(0.82);transform-origin:0 0;">10</span>
<span class="nw" style="left:1286.10px;top:399.72px;font-size:11.2px;line-height:11.2px;color:#3b6c98;letter-spacing:0.42px;-webkit-text-stroke:0.25px #3b6c98;"><svg style="position:static;display:inline-block;vertical-align:baseline;margin-left:0px;margin-right:0.8px;overflow:visible" width="5.72" height="7.63" viewBox="0 0 15 20"><path d="M0.6 1.4 Q3.9 1.2 3.9 5 L3.9 13.5 Q3.9 18.6 8.2 18.6 Q13.4 18.6 13.4 11.5 Q13.4 7 10.6 7 Q9.2 7 8.4 8.3 M0.4 7.8 L6.8 7.8" stroke="#3b6c98" stroke-width="2.7" fill="none"/></svg>71,496.8</span>
<div style="left:1442px;top:366.5px;width:232.5px;height:58.5px;border-radius:8px;background:#fff;border:1px solid #e1efe1"></div>
<div style="left:1454px;top:379px;width:34px;height:34px;border-radius:8px;background:#e7f4e7"></div>
<svg style="left:1460px;top:385px" width="22" height="22" viewBox="0 0 22 22"><circle cx="11" cy="11" r="7.5" stroke="#3fae4a" stroke-width="2" fill="none"/><path d="M7.5 11 L10 13.5 L14.5 8.5" stroke="#3fae4a" stroke-width="2" fill="none"/></svg>
<span class="nw" style="left:1500.40px;top:379.19px;font-size:11px;line-height:11px;color:#4d5157;letter-spacing:0.35px;">Completed</span>
<span class="nw" style="left:1500.00px;top:396.72px;font-size:18.4px;line-height:18.4px;color:#000;font-weight:700;letter-spacing:-0.2px;transform:scaleX(1.0);transform-origin:0 0;">76</span>
<span class="nw" style="left:1528.80px;top:399.72px;font-size:11.2px;line-height:11.2px;color:#58ab60;letter-spacing:0.42px;-webkit-text-stroke:0.25px #58ab60;"><svg style="position:static;display:inline-block;vertical-align:baseline;margin-left:0px;margin-right:0.8px;overflow:visible" width="5.72" height="7.63" viewBox="0 0 15 20"><path d="M0.6 1.4 Q3.9 1.2 3.9 5 L3.9 13.5 Q3.9 18.6 8.2 18.6 Q13.4 18.6 13.4 11.5 Q13.4 7 10.6 7 Q9.2 7 8.4 8.3 M0.4 7.8 L6.8 7.8" stroke="#58ab60" stroke-width="2.7" fill="none"/></svg>4,88,179.7</span>
<div style="left:1681px;top:366.5px;width:232.5px;height:58.5px;border-radius:8px;background:#fff;border:1px solid #f3e6e1"></div>
<div style="left:1693px;top:379px;width:34px;height:34px;border-radius:8px;background:#fbeae6"></div>
<svg style="left:1699px;top:385px" width="22" height="22" viewBox="0 0 22 22"><circle cx="11" cy="11" r="7.5" stroke="#e8433a" stroke-width="2" fill="none"/><path d="M8 8 L14 14 M14 8 L8 14" stroke="#e8433a" stroke-width="2"/></svg>
<span class="nw" style="left:1739.40px;top:379.19px;font-size:11px;line-height:11px;color:#4d5157;letter-spacing:0.35px;">Cancelled</span>
<span class="nw" style="left:1739.00px;top:396.72px;font-size:18.4px;line-height:18.4px;color:#000;font-weight:700;letter-spacing:-0.2px;transform:scaleX(1.0);transform-origin:0 0;">6</span>
<span class="nw" style="left:1757.70px;top:399.72px;font-size:11.2px;line-height:11.2px;color:#ee5845;letter-spacing:0.42px;-webkit-text-stroke:0.25px #ee5845;"><svg style="position:static;display:inline-block;vertical-align:baseline;margin-left:0px;margin-right:0.8px;overflow:visible" width="5.72" height="7.63" viewBox="0 0 15 20"><path d="M0.6 1.4 Q3.9 1.2 3.9 5 L3.9 13.5 Q3.9 18.6 8.2 18.6 Q13.4 18.6 13.4 11.5 Q13.4 7 10.6 7 Q9.2 7 8.4 8.3 M0.4 7.8 L6.8 7.8" stroke="#ee5845" stroke-width="2.7" fill="none"/></svg>46,415.3</span>
<div style="left:247px;top:431px;width:1666.5px;height:58px;border-radius:8px;background:#fff;border:1px solid #ececee;box-shadow:0 5px 4px 2px #e7e7e9"></div>
<div style="left:259px;top:443px;width:34px;height:34px;border-radius:8px;background:#f1f1f2"></div>
<svg style="left:265px;top:449px" width="22" height="22" viewBox="0 0 22 22"><path d="M14 6.5 Q13 5 10.5 5 Q7.5 5 7.5 7.5 Q7.5 9.5 10.5 10 Q14 10.5 14 13.5 Q14 16 10.5 16 Q8 16 7 14.5 M10.5 3 L10.5 18.5 M4.5 4.5 L17 17" stroke="#9a9a9e" stroke-width="1.9" fill="none" stroke-linecap="round"/></svg>
<span class="nw" style="left:305.40px;top:443.19px;font-size:11px;line-height:11px;color:#4d5157;letter-spacing:0.35px;">Refunded</span>
<span class="nw" style="left:305.00px;top:460.72px;font-size:18.4px;line-height:18.4px;color:#000;font-weight:700;">0</span>
<span class="nw" style="left:324.50px;top:463.72px;font-size:11.2px;line-height:11.2px;color:#ababae;letter-spacing:0.42px;-webkit-text-stroke:0.25px #ababae;"><svg style="position:static;display:inline-block;vertical-align:baseline;margin-left:0px;margin-right:0.8px;overflow:visible" width="5.72" height="7.63" viewBox="0 0 15 20"><path d="M0.6 1.4 Q3.9 1.2 3.9 5 L3.9 13.5 Q3.9 18.6 8.2 18.6 Q13.4 18.6 13.4 11.5 Q13.4 7 10.6 7 Q9.2 7 8.4 8.3 M0.4 7.8 L6.8 7.8" stroke="#ababae" stroke-width="2.7" fill="none"/></svg>0.0</span><div style="left:246px;top:498.5px;width:997px;height:499px;border-radius:10px;background:#fff;box-shadow:0 0 0 1px #efeff1"></div>
<span class="nw" style="left:255.00px;top:517.83px;font-size:19.1px;line-height:19.1px;color:#0a0a0a;font-weight:700;letter-spacing:-0.05px;">Transaction Overview</span>
<div style="left:1205px;top:508px;width:35px;height:21px;border-radius:10.5px;background:#8ea5d1"></div>
<div style="left:1219px;top:508px;width:21px;height:21px;border-radius:50%;background:#1d4a92"></div>
<span class="nw" style="right:684.50px;top:533.18px;font-size:11.6px;line-height:11.6px;color:#1d4a92;font-weight:700;letter-spacing:0.35px;">Financial</span>
<svg style="left:0;top:0" width="1920" height="1080" viewBox="0 0 1920 1080">
<defs><symbol id="tk" viewBox="0 0 15 20"><path d="M0.6 1.4 Q3.9 1.2 3.9 5 L3.9 13.5 Q3.9 18.6 8.2 18.6 Q13.4 18.6 13.4 11.5 Q13.4 7 10.6 7 Q9.2 7 8.4 8.3 M0.4 7.8 L6.8 7.8" stroke="currentColor" stroke-width="2.5" fill="none"/></symbol><clipPath id="pc"><rect x="240" y="560" width="996.5" height="440"/></clipPath></defs>
<path d="M294.8 963.3 L1236.0 963.3 M294.8 898.0 L1236.0 898.0 M294.8 832.6 L1236.0 832.6 M294.8 767.3 L1236.0 767.3 M294.8 702.0 L1236.0 702.0 M294.8 636.6 L1236.0 636.6 M294.8 571.3 L1236.0 571.3 M294.8 571.3 L294.8 963.3 M355.5 571.3 L355.5 963.3 M416.2 571.3 L416.2 963.3 M477.0 571.3 L477.0 963.3 M537.7 571.3 L537.7 963.3 M598.4 571.3 L598.4 963.3 M659.1 571.3 L659.1 963.3 M719.9 571.3 L719.9 963.3 M780.6 571.3 L780.6 963.3 M841.3 571.3 L841.3 963.3 M902.0 571.3 L902.0 963.3 M962.7 571.3 L962.7 963.3 M1023.5 571.3 L1023.5 963.3 M1084.2 571.3 L1084.2 963.3 M1144.9 571.3 L1144.9 963.3 M1205.6 571.3 L1205.6 963.3 M1236.0 571.3 L1236.0 963.3" stroke="#e6e1ed" stroke-width="1.1" fill="none"/>
<use href="#tk" x="271.4" y="958.7" width="6.9" height="9.2" style="color:#74767a"/>
<text x="286" y="967.9" text-anchor="end" font-family="Liberation Sans" font-size="13" fill="#74767a">0</text>
<use href="#tk" x="262.7" y="893.4" width="6.9" height="9.2" style="color:#74767a"/>
<text x="286" y="902.6" text-anchor="end" font-family="Liberation Sans" font-size="13" fill="#74767a">5K</text>
<use href="#tk" x="255.5" y="828.0" width="6.9" height="9.2" style="color:#74767a"/>
<text x="286" y="837.2" text-anchor="end" font-family="Liberation Sans" font-size="13" fill="#74767a">10K</text>
<use href="#tk" x="255.5" y="762.7" width="6.9" height="9.2" style="color:#74767a"/>
<text x="286" y="771.9" text-anchor="end" font-family="Liberation Sans" font-size="13" fill="#74767a">15K</text>
<use href="#tk" x="255.5" y="697.4" width="6.9" height="9.2" style="color:#74767a"/>
<text x="286" y="706.6" text-anchor="end" font-family="Liberation Sans" font-size="13" fill="#74767a">20K</text>
<use href="#tk" x="255.5" y="632.0" width="6.9" height="9.2" style="color:#74767a"/>
<text x="286" y="641.2" text-anchor="end" font-family="Liberation Sans" font-size="13" fill="#74767a">25K</text>
<use href="#tk" x="255.5" y="566.7" width="6.9" height="9.2" style="color:#74767a"/>
<text x="286" y="575.9" text-anchor="end" font-family="Liberation Sans" font-size="13" fill="#74767a">30K</text>
<text x="310.0" y="984.2" text-anchor="middle" font-family="Liberation Sans" font-size="13" fill="#74767a">1</text>
<text x="370.7" y="984.2" text-anchor="middle" font-family="Liberation Sans" font-size="13" fill="#74767a">3</text>
<text x="431.4" y="984.2" text-anchor="middle" font-family="Liberation Sans" font-size="13" fill="#74767a">5</text>
<text x="492.1" y="984.2" text-anchor="middle" font-family="Liberation Sans" font-size="13" fill="#74767a">7</text>
<text x="552.9" y="984.2" text-anchor="middle" font-family="Liberation Sans" font-size="13" fill="#74767a">9</text>
<text x="613.6" y="984.2" text-anchor="middle" font-family="Liberation Sans" font-size="13" fill="#74767a">11</text>
<text x="674.3" y="984.2" text-anchor="middle" font-family="Liberation Sans" font-size="13" fill="#74767a">13</text>
<text x="735.0" y="984.2" text-anchor="middle" font-family="Liberation Sans" font-size="13" fill="#74767a">15</text>
<text x="795.8" y="984.2" text-anchor="middle" font-family="Liberation Sans" font-size="13" fill="#74767a">17</text>
<text x="856.5" y="984.2" text-anchor="middle" font-family="Liberation Sans" font-size="13" fill="#74767a">19</text>
<text x="917.2" y="984.2" text-anchor="middle" font-family="Liberation Sans" font-size="13" fill="#74767a">21</text>
<text x="977.9" y="984.2" text-anchor="middle" font-family="Liberation Sans" font-size="13" fill="#74767a">23</text>
<text x="1038.7" y="984.2" text-anchor="middle" font-family="Liberation Sans" font-size="13" fill="#74767a">25</text>
<text x="1099.4" y="984.2" text-anchor="middle" font-family="Liberation Sans" font-size="13" fill="#74767a">27</text>
<text x="1160.1" y="984.2" text-anchor="middle" font-family="Liberation Sans" font-size="13" fill="#74767a">29</text>
<text x="1220.8" y="984.2" text-anchor="middle" font-family="Liberation Sans" font-size="13" fill="#74767a">31</text>
<g clip-path="url(#pc)">
<polyline points="310.0,911.3 340.3,806.5 370.7,919.8 401.1,758.2 431.4,865.8 461.8,910.1 492.1,936.8 522.5,645.8 552.9,918.4 583.2,769.9 613.6,929.2 644.0,743.8 674.3,922.5 704.7,963.3 735.0,884.4 765.4,768.6 795.8,855.8 826.1,890.1 856.5,728.1 886.8,878.1 917.2,835.2 947.6,759.5 977.9,845.4 1008.3,909.9 1038.7,866.5 1069.0,709.8 1099.4,927.2 1129.7,942.4 1160.1,926.1 1190.5,911.9 1220.8,855.9" stroke="#1d4a92" stroke-width="2" fill="none" stroke-linejoin="miter" stroke-miterlimit="4"/>
<circle cx="310.0" cy="911.3" r="4.3" fill="#fff" stroke="#1d4a92" stroke-width="2"/>
<circle cx="340.3" cy="806.5" r="4.3" fill="#fff" stroke="#1d4a92" stroke-width="2"/>
<circle cx="370.7" cy="919.8" r="4.3" fill="#fff" stroke="#1d4a92" stroke-width="2"/>
<circle cx="401.1" cy="758.2" r="4.3" fill="#fff" stroke="#1d4a92" stroke-width="2"/>
<circle cx="431.4" cy="865.8" r="4.3" fill="#fff" stroke="#1d4a92" stroke-width="2"/>
<circle cx="461.8" cy="910.1" r="4.3" fill="#fff" stroke="#1d4a92" stroke-width="2"/>
<circle cx="492.1" cy="936.8" r="4.3" fill="#fff" stroke="#1d4a92" stroke-width="2"/>
<circle cx="522.5" cy="645.8" r="4.3" fill="#fff" stroke="#1d4a92" stroke-width="2"/>
<circle cx="552.9" cy="918.4" r="4.3" fill="#fff" stroke="#1d4a92" stroke-width="2"/>
<circle cx="583.2" cy="769.9" r="4.3" fill="#fff" stroke="#1d4a92" stroke-width="2"/>
<circle cx="613.6" cy="929.2" r="4.3" fill="#fff" stroke="#1d4a92" stroke-width="2"/>
<circle cx="644.0" cy="743.8" r="4.3" fill="#fff" stroke="#1d4a92" stroke-width="2"/>
<circle cx="674.3" cy="922.5" r="4.3" fill="#fff" stroke="#1d4a92" stroke-width="2"/>
<circle cx="704.7" cy="963.3" r="4.3" fill="#fff" stroke="#1d4a92" stroke-width="2"/>
<circle cx="735.0" cy="884.4" r="4.3" fill="#fff" stroke="#1d4a92" stroke-width="2"/>
<circle cx="765.4" cy="768.6" r="4.3" fill="#fff" stroke="#1d4a92" stroke-width="2"/>
<circle cx="795.8" cy="855.8" r="4.3" fill="#fff" stroke="#1d4a92" stroke-width="2"/>
<circle cx="826.1" cy="890.1" r="4.3" fill="#fff" stroke="#1d4a92" stroke-width="2"/>
<circle cx="856.5" cy="728.1" r="4.3" fill="#fff" stroke="#1d4a92" stroke-width="2"/>
<circle cx="886.8" cy="878.1" r="4.3" fill="#fff" stroke="#1d4a92" stroke-width="2"/>
<circle cx="917.2" cy="835.2" r="4.3" fill="#fff" stroke="#1d4a92" stroke-width="2"/>
<circle cx="947.6" cy="759.5" r="4.3" fill="#fff" stroke="#1d4a92" stroke-width="2"/>
<circle cx="977.9" cy="845.4" r="4.3" fill="#fff" stroke="#1d4a92" stroke-width="2"/>
<circle cx="1008.3" cy="909.9" r="4.3" fill="#fff" stroke="#1d4a92" stroke-width="2"/>
<circle cx="1038.7" cy="866.5" r="4.3" fill="#fff" stroke="#1d4a92" stroke-width="2"/>
<circle cx="1069.0" cy="709.8" r="4.3" fill="#fff" stroke="#1d4a92" stroke-width="2"/>
<circle cx="1099.4" cy="927.2" r="4.3" fill="#fff" stroke="#1d4a92" stroke-width="2"/>
<circle cx="1129.7" cy="942.4" r="4.3" fill="#fff" stroke="#1d4a92" stroke-width="2"/>
<circle cx="1160.1" cy="926.1" r="4.3" fill="#fff" stroke="#1d4a92" stroke-width="2"/>
<circle cx="1190.5" cy="911.9" r="4.3" fill="#fff" stroke="#1d4a92" stroke-width="2"/>
<circle cx="1220.8" cy="855.9" r="4.3" fill="#fff" stroke="#1d4a92" stroke-width="2"/>
<use href="#tk" x="300.5" y="929.7" width="5.7" height="7.6" style="color:#1a1a1a"/>
<text x="306.8" y="937.3" font-family="Liberation Sans" font-size="11" fill="#1a1a1a">3.98K</text>
<use href="#tk" x="327.4" y="780.9" width="5.7" height="7.6" style="color:#1a1a1a"/>
<text x="333.7" y="788.5" font-family="Liberation Sans" font-size="11" fill="#1a1a1a">12K</text>
<use href="#tk" x="353.2" y="938.2" width="5.7" height="7.6" style="color:#1a1a1a"/>
<text x="359.5" y="945.8" font-family="Liberation Sans" font-size="11" fill="#1a1a1a">3.33K</text>
<use href="#tk" x="383.5" y="732.6" width="5.7" height="7.6" style="color:#1a1a1a"/>
<text x="389.8" y="740.2" font-family="Liberation Sans" font-size="11" fill="#1a1a1a">15.7K</text>
<use href="#tk" x="413.9" y="884.2" width="5.7" height="7.6" style="color:#1a1a1a"/>
<text x="420.2" y="891.8" font-family="Liberation Sans" font-size="11" fill="#1a1a1a">7.46K</text>
<use href="#tk" x="444.3" y="928.5" width="5.7" height="7.6" style="color:#1a1a1a"/>
<text x="450.6" y="936.1" font-family="Liberation Sans" font-size="11" fill="#1a1a1a">4.07K</text>
<use href="#tk" x="474.6" y="955.2" width="5.7" height="7.6" style="color:#1a1a1a"/>
<text x="480.9" y="962.8" font-family="Liberation Sans" font-size="11" fill="#1a1a1a">2.03K</text>
<use href="#tk" x="505.0" y="620.2" width="5.7" height="7.6" style="color:#1a1a1a"/>
<text x="511.3" y="627.8" font-family="Liberation Sans" font-size="11" fill="#1a1a1a">24.3K</text>
<use href="#tk" x="535.3" y="936.8" width="5.7" height="7.6" style="color:#1a1a1a"/>
<text x="541.6" y="944.4" font-family="Liberation Sans" font-size="11" fill="#1a1a1a">3.44K</text>
<use href="#tk" x="565.7" y="744.3" width="5.7" height="7.6" style="color:#1a1a1a"/>
<text x="572.0" y="751.9" font-family="Liberation Sans" font-size="11" fill="#1a1a1a">14.8K</text>
<use href="#tk" x="596.1" y="947.6" width="5.7" height="7.6" style="color:#1a1a1a"/>
<text x="602.4" y="955.2" font-family="Liberation Sans" font-size="11" fill="#1a1a1a">2.61K</text>
<use href="#tk" x="626.4" y="718.2" width="5.7" height="7.6" style="color:#1a1a1a"/>
<text x="632.7" y="725.8" font-family="Liberation Sans" font-size="11" fill="#1a1a1a">16.8K</text>
<use href="#tk" x="656.8" y="940.9" width="5.7" height="7.6" style="color:#1a1a1a"/>
<text x="663.1" y="948.5" font-family="Liberation Sans" font-size="11" fill="#1a1a1a">3.12K</text>
<use href="#tk" x="717.5" y="902.8" width="5.7" height="7.6" style="color:#1a1a1a"/>
<text x="723.8" y="910.4" font-family="Liberation Sans" font-size="11" fill="#1a1a1a">6.04K</text>
<use href="#tk" x="747.9" y="743.0" width="5.7" height="7.6" style="color:#1a1a1a"/>
<text x="754.2" y="750.6" font-family="Liberation Sans" font-size="11" fill="#1a1a1a">14.9K</text>
<use href="#tk" x="778.2" y="874.2" width="5.7" height="7.6" style="color:#1a1a1a"/>
<text x="784.5" y="881.8" font-family="Liberation Sans" font-size="11" fill="#1a1a1a">8.23K</text>
<use href="#tk" x="811.7" y="908.5" width="5.7" height="7.6" style="color:#1a1a1a"/>
<text x="818.0" y="916.1" font-family="Liberation Sans" font-size="11" fill="#1a1a1a">5.6K</text>
<use href="#tk" x="843.5" y="702.5" width="5.7" height="7.6" style="color:#1a1a1a"/>
<text x="849.8" y="710.1" font-family="Liberation Sans" font-size="11" fill="#1a1a1a">18K</text>
<use href="#tk" x="869.3" y="896.5" width="5.7" height="7.6" style="color:#1a1a1a"/>
<text x="875.6" y="904.1" font-family="Liberation Sans" font-size="11" fill="#1a1a1a">6.52K</text>
<use href="#tk" x="902.7" y="853.6" width="5.7" height="7.6" style="color:#1a1a1a"/>
<text x="909.0" y="861.2" font-family="Liberation Sans" font-size="11" fill="#1a1a1a">9.8K</text>
<use href="#tk" x="930.0" y="733.9" width="5.7" height="7.6" style="color:#1a1a1a"/>
<text x="936.3" y="741.5" font-family="Liberation Sans" font-size="11" fill="#1a1a1a">15.6K</text>
<use href="#tk" x="960.4" y="863.8" width="5.7" height="7.6" style="color:#1a1a1a"/>
<text x="966.7" y="871.4" font-family="Liberation Sans" font-size="11" fill="#1a1a1a">9.02K</text>
<use href="#tk" x="990.8" y="928.3" width="5.7" height="7.6" style="color:#1a1a1a"/>
<text x="997.1" y="935.9" font-family="Liberation Sans" font-size="11" fill="#1a1a1a">4.09K</text>
<use href="#tk" x="1021.1" y="884.9" width="5.7" height="7.6" style="color:#1a1a1a"/>
<text x="1027.4" y="892.5" font-family="Liberation Sans" font-size="11" fill="#1a1a1a">7.41K</text>
<use href="#tk" x="1051.5" y="684.2" width="5.7" height="7.6" style="color:#1a1a1a"/>
<text x="1057.8" y="691.8" font-family="Liberation Sans" font-size="11" fill="#1a1a1a">19.4K</text>
<use href="#tk" x="1081.9" y="945.6" width="5.7" height="7.6" style="color:#1a1a1a"/>
<text x="1088.2" y="953.2" font-family="Liberation Sans" font-size="11" fill="#1a1a1a">2.76K</text>
<use href="#tk" x="1142.6" y="900.5" width="5.7" height="7.6" style="color:#1a1a1a"/>
<text x="1148.9" y="908.1" font-family="Liberation Sans" font-size="11" fill="#1a1a1a">2.85K</text>
<use href="#tk" x="1172.9" y="930.3" width="5.7" height="7.6" style="color:#1a1a1a"/>
<text x="1179.2" y="937.9" font-family="Liberation Sans" font-size="11" fill="#1a1a1a">3.93K</text>
<use href="#tk" x="1203.3" y="830.3" width="5.7" height="7.6" style="color:#1a1a1a"/>
<text x="1209.6" y="837.9" font-family="Liberation Sans" font-size="11" fill="#1a1a1a">8.22K</text>
</g></svg><div style="left:1249px;top:498.5px;width:664.5px;height:499px;border-radius:10px;background:#fff;box-shadow:0 0 0 1px #efeff1"></div>
<span class="nw" style="left:1257.60px;top:517.83px;font-size:19.1px;line-height:19.1px;color:#0a0a0a;font-weight:700;letter-spacing:0.24px;">Calendar Overview</span>
<div style="left:1876px;top:508px;width:35px;height:21px;border-radius:10.5px;background:#8ea5d1"></div>
<div style="left:1890px;top:508px;width:21px;height:21px;border-radius:50%;background:#1d4a92"></div>
<span class="nw" style="right:15.00px;top:533.18px;font-size:11.6px;line-height:11.6px;color:#1d4a92;font-weight:700;letter-spacing:0.35px;">Financial</span>
<div style="left:1265px;top:579px;width:28px;height:28px;border-radius:8px;background:#b9c5dd;box-shadow:0 2px 3px rgba(0,0,0,0.08)"></div>
<svg style="left:1265px;top:579px" width="28" height="28" viewBox="0 0 28 28"><path d="M16.5 8 L11 14 L16.5 20" stroke="#1d4a92" stroke-width="2.6" fill="none"/></svg>
<div style="left:1870px;top:579px;width:28px;height:28px;border-radius:8px;background:#b9c5dd;box-shadow:0 2px 3px rgba(0,0,0,0.08)"></div>
<svg style="left:1870px;top:579px" width="28" height="28" viewBox="0 0 28 28"><path d="M11.5 8 L17 14 L11.5 20" stroke="#1d4a92" stroke-width="2.6" fill="none"/></svg>
<span class="nw" style="left:1281.30px;width:600px;text-align:center;top:583.65px;font-size:20.5px;line-height:20.5px;color:#1d4a92;font-weight:700;letter-spacing:-0.58px;">October 2025</span>
<span class="nw" style="left:1003.00px;width:600px;text-align:center;top:634.14px;font-size:14.6px;line-height:14.6px;color:#36383c;">Sat</span>
<span class="nw" style="left:1096.00px;width:600px;text-align:center;top:634.14px;font-size:14.6px;line-height:14.6px;color:#36383c;">Sun</span>
<span class="nw" style="left:1188.70px;width:600px;text-align:center;top:634.14px;font-size:14.6px;line-height:14.6px;color:#36383c;">Mon</span>
<span class="nw" style="left:1281.00px;width:600px;text-align:center;top:634.14px;font-size:14.6px;line-height:14.6px;color:#36383c;">Tue</span>
<span class="nw" style="left:1374.00px;width:600px;text-align:center;top:634.14px;font-size:14.6px;line-height:14.6px;color:#36383c;">Wed</span>
<span class="nw" style="left:1467.00px;width:600px;text-align:center;top:634.14px;font-size:14.6px;line-height:14.6px;color:#36383c;">Thu</span>
<span class="nw" style="left:1559.00px;width:600px;text-align:center;top:634.14px;font-size:14.6px;line-height:14.6px;color:#36383c;">Fri</span>
<svg style="left:0;top:0" width="1920" height="1080" viewBox="0 0 1920 1080">
<text x="1303" y="683.5" text-anchor="middle" font-family="Liberation Sans" font-size="15" font-weight="700" fill="#c4c4c6">27</text>
<text x="1396" y="683.5" text-anchor="middle" font-family="Liberation Sans" font-size="15" font-weight="700" fill="#c4c4c6">28</text>
<text x="1488.7" y="683.5" text-anchor="middle" font-family="Liberation Sans" font-size="15" font-weight="700" fill="#c4c4c6">29</text>
<text x="1581" y="683.5" text-anchor="middle" font-family="Liberation Sans" font-size="15" font-weight="700" fill="#c4c4c6">30</text>
<circle cx="1674" cy="677" r="18" stroke="#d9d9db" stroke-width="3" fill="none"/>
<path d="M1674.31 659.00 A18 18 0 0 1 1678.66 659.61" stroke="#1d4a92" stroke-width="3" fill="none" stroke-linecap="round"/>
<text x="1674" y="683.5" text-anchor="middle" font-family="Liberation Sans" font-size="15" font-weight="700" fill="#1d4a92" letter-spacing="-0.3">1</text>
<circle cx="1767" cy="677" r="18" stroke="#d9d9db" stroke-width="3" fill="none"/>
<path d="M1767.31 659.00 A18 18 0 0 1 1772.26 659.79" stroke="#1d4a92" stroke-width="3" fill="none" stroke-linecap="round"/>
<text x="1767" y="683.5" text-anchor="middle" font-family="Liberation Sans" font-size="15" font-weight="700" fill="#1d4a92" letter-spacing="-0.3">2</text>
<circle cx="1859" cy="677" r="18" stroke="#d9d9db" stroke-width="3" fill="none"/>
<path d="M1859.31 659.00 A18 18 0 0 1 1863.66 659.61" stroke="#1d4a92" stroke-width="3" fill="none" stroke-linecap="round"/>
<text x="1859" y="683.5" text-anchor="middle" font-family="Liberation Sans" font-size="15" font-weight="700" fill="#1d4a92" letter-spacing="-0.3">3</text>
<circle cx="1303" cy="729" r="18" stroke="#d9d9db" stroke-width="3" fill="none"/>
<path d="M1303.31 711.00 A18 18 0 0 1 1307.66 711.61" stroke="#1d4a92" stroke-width="3" fill="none" stroke-linecap="round"/>
<text x="1303" y="735.5" text-anchor="middle" font-family="Liberation Sans" font-size="15" font-weight="700" fill="#1d4a92" letter-spacing="-0.3">4</text>
<circle cx="1396" cy="729" r="18" stroke="#d9d9db" stroke-width="3" fill="none"/>
<path d="M1396.31 711.00 A18 18 0 0 1 1400.66 711.61" stroke="#1d4a92" stroke-width="3" fill="none" stroke-linecap="round"/>
<text x="1396" y="735.5" text-anchor="middle" font-family="Liberation Sans" font-size="15" font-weight="700" fill="#1d4a92" letter-spacing="-0.3">5</text>
<circle cx="1488.7" cy="729" r="18" stroke="#d9d9db" stroke-width="3" fill="none"/>
<path d="M1489.01 711.00 A18 18 0 0 1 1492.75 711.46" stroke="#1d4a92" stroke-width="3" fill="none" stroke-linecap="round"/>
<text x="1488.7" y="735.5" text-anchor="middle" font-family="Liberation Sans" font-size="15" font-weight="700" fill="#1d4a92" letter-spacing="-0.3">6</text>
<circle cx="1581" cy="729" r="18" stroke="#d9d9db" stroke-width="3" fill="none"/>
<path d="M1581.31 711.00 A18 18 0 0 1 1583.19 711.13" stroke="#1d4a92" stroke-width="3" fill="none" stroke-linecap="round"/>
<text x="1581" y="735.5" text-anchor="middle" font-family="Liberation Sans" font-size="15" font-weight="700" fill="#1d4a92" letter-spacing="-0.3">7</text>
<circle cx="1674" cy="729" r="18" stroke="#d9d9db" stroke-width="3" fill="none"/>
<path d="M1674.31 711.00 A18 18 0 0 1 1678.66 711.61" stroke="#1d4a92" stroke-width="3" fill="none" stroke-linecap="round"/>
<text x="1674" y="735.5" text-anchor="middle" font-family="Liberation Sans" font-size="15" font-weight="700" fill="#1d4a92" letter-spacing="-0.3">8</text>
<circle cx="1767" cy="729" r="18" stroke="#d9d9db" stroke-width="3" fill="none"/>
<path d="M1767.31 711.00 A18 18 0 0 1 1769.19 711.13" stroke="#1d4a92" stroke-width="3" fill="none" stroke-linecap="round"/>
<text x="1767" y="735.5" text-anchor="middle" font-family="Liberation Sans" font-size="15" font-weight="700" fill="#1d4a92" letter-spacing="-0.3">9</text>
<circle cx="1859" cy="729" r="18" stroke="#d9d9db" stroke-width="3" fill="none"/>
<path d="M1859.31 711.00 A18 18 0 0 1 1868.80 713.90" stroke="#1d4a92" stroke-width="3" fill="none" stroke-linecap="round"/>
<text x="1859" y="735.5" text-anchor="middle" font-family="Liberation Sans" font-size="15" font-weight="700" fill="#1d4a92" letter-spacing="-0.3">10</text>
<circle cx="1303" cy="781" r="18" stroke="#d9d9db" stroke-width="3" fill="none"/>
<path d="M1303.31 763.00 A18 18 0 0 1 1305.82 763.22" stroke="#1d4a92" stroke-width="3" fill="none" stroke-linecap="round"/>
<text x="1303" y="787.5" text-anchor="middle" font-family="Liberation Sans" font-size="15" font-weight="700" fill="#1d4a92" letter-spacing="-0.3">11</text>
<circle cx="1396" cy="781" r="18" stroke="#d9d9db" stroke-width="3" fill="none"/>
<path d="M1396.31 763.00 A18 18 0 0 1 1405.27 765.57" stroke="#1d4a92" stroke-width="3" fill="none" stroke-linecap="round"/>
<text x="1396" y="787.5" text-anchor="middle" font-family="Liberation Sans" font-size="15" font-weight="700" fill="#1d4a92" letter-spacing="-0.3">12</text>
<circle cx="1488.7" cy="781" r="18" stroke="#d9d9db" stroke-width="3" fill="none"/>
<path d="M1489.01 763.00 A18 18 0 0 1 1491.52 763.22" stroke="#1d4a92" stroke-width="3" fill="none" stroke-linecap="round"/>
<text x="1488.7" y="787.5" text-anchor="middle" font-family="Liberation Sans" font-size="15" font-weight="700" fill="#1d4a92" letter-spacing="-0.3">13</text>
<circle cx="1581" cy="781" r="18" stroke="#d9d9db" stroke-width="3" fill="none"/>
<text x="1581" y="787.5" text-anchor="middle" font-family="Liberation Sans" font-size="15" font-weight="700" fill="#e53a2f" letter-spacing="-0.3">14</text>
<circle cx="1674" cy="781" r="18" stroke="#d9d9db" stroke-width="3" fill="none"/>
<path d="M1674.31 763.00 A18 18 0 0 1 1677.43 763.33" stroke="#1d4a92" stroke-width="3" fill="none" stroke-linecap="round"/>
<text x="1674" y="787.5" text-anchor="middle" font-family="Liberation Sans" font-size="15" font-weight="700" fill="#1d4a92" letter-spacing="-0.3">15</text>
<circle cx="1767" cy="781" r="18" stroke="#d9d9db" stroke-width="3" fill="none"/>
<path d="M1767.31 763.00 A18 18 0 0 1 1776.27 765.57" stroke="#1d4a92" stroke-width="3" fill="none" stroke-linecap="round"/>
<text x="1767" y="787.5" text-anchor="middle" font-family="Liberation Sans" font-size="15" font-weight="700" fill="#1d4a92" letter-spacing="-0.3">16</text>
<circle cx="1859" cy="781" r="18" stroke="#d9d9db" stroke-width="3" fill="none"/>
<path d="M1859.31 763.00 A18 18 0 0 1 1863.05 763.46" stroke="#1d4a92" stroke-width="3" fill="none" stroke-linecap="round"/>
<text x="1859" y="787.5" text-anchor="middle" font-family="Liberation Sans" font-size="15" font-weight="700" fill="#1d4a92" letter-spacing="-0.3">17</text>
<circle cx="1303" cy="833" r="18" stroke="#d9d9db" stroke-width="3" fill="none"/>
<path d="M1303.31 815.00 A18 18 0 0 1 1306.43 815.33" stroke="#1d4a92" stroke-width="3" fill="none" stroke-linecap="round"/>
<text x="1303" y="839.5" text-anchor="middle" font-family="Liberation Sans" font-size="15" font-weight="700" fill="#1d4a92" letter-spacing="-0.3">18</text>
<circle cx="1396" cy="833" r="18" stroke="#d9d9db" stroke-width="3" fill="none"/>
<path d="M1396.31 815.00 A18 18 0 0 1 1403.03 816.43" stroke="#1d4a92" stroke-width="3" fill="none" stroke-linecap="round"/>
<text x="1396" y="839.5" text-anchor="middle" font-family="Liberation Sans" font-size="15" font-weight="700" fill="#1d4a92" letter-spacing="-0.3">19</text>
<circle cx="1488.7" cy="833" r="18" stroke="#d9d9db" stroke-width="3" fill="none"/>
<path d="M1489.01 815.00 A18 18 0 0 1 1496.87 816.96" stroke="#1d4a92" stroke-width="3" fill="none" stroke-linecap="round"/>
<text x="1488.7" y="839.5" text-anchor="middle" font-family="Liberation Sans" font-size="15" font-weight="700" fill="#1d4a92" letter-spacing="-0.3">20</text>
<circle cx="1581" cy="833" r="18" stroke="#d9d9db" stroke-width="3" fill="none"/>
<path d="M1581.31 815.00 A18 18 0 0 1 1583.82 815.22" stroke="#1d4a92" stroke-width="3" fill="none" stroke-linecap="round"/>
<text x="1581" y="839.5" text-anchor="middle" font-family="Liberation Sans" font-size="15" font-weight="700" fill="#1d4a92" letter-spacing="-0.3">21</text>
<circle cx="1674" cy="833" r="18" stroke="#d9d9db" stroke-width="3" fill="none"/>
<path d="M1674.31 815.00 A18 18 0 0 1 1683.27 817.57" stroke="#1d4a92" stroke-width="3" fill="none" stroke-linecap="round"/>
<text x="1674" y="839.5" text-anchor="middle" font-family="Liberation Sans" font-size="15" font-weight="700" fill="#1d4a92" letter-spacing="-0.3">22</text>
<circle cx="1767" cy="833" r="18" stroke="#d9d9db" stroke-width="3" fill="none"/>
<path d="M1767.31 815.00 A18 18 0 0 1 1772.26 815.79" stroke="#1d4a92" stroke-width="3" fill="none" stroke-linecap="round"/>
<text x="1767" y="839.5" text-anchor="middle" font-family="Liberation Sans" font-size="15" font-weight="700" fill="#1d4a92" letter-spacing="-0.3">23</text>
<circle cx="1859" cy="833" r="18" stroke="#d9d9db" stroke-width="3" fill="none"/>
<path d="M1859.31 815.00 A18 18 0 0 1 1863.66 815.61" stroke="#1d4a92" stroke-width="3" fill="none" stroke-linecap="round"/>
<text x="1859" y="839.5" text-anchor="middle" font-family="Liberation Sans" font-size="15" font-weight="700" fill="#1d4a92" letter-spacing="-0.3">24</text>
<circle cx="1303" cy="885" r="18" stroke="#d9d9db" stroke-width="3" fill="none"/>
<path d="M1303.31 867.00 A18 18 0 0 1 1305.82 867.22" stroke="#1d4a92" stroke-width="3" fill="none" stroke-linecap="round"/>
<text x="1303" y="891.5" text-anchor="middle" font-family="Liberation Sans" font-size="15" font-weight="700" fill="#1d4a92" letter-spacing="-0.3">25</text>
<circle cx="1396" cy="885" r="18" stroke="#d9d9db" stroke-width="3" fill="none"/>
<path d="M1396.31 867.00 A18 18 0 0 1 1406.32 870.26" stroke="#1d4a92" stroke-width="3" fill="none" stroke-linecap="round"/>
<text x="1396" y="891.5" text-anchor="middle" font-family="Liberation Sans" font-size="15" font-weight="700" fill="#1d4a92" letter-spacing="-0.3">26</text>
<circle cx="1488.7" cy="885" r="18" stroke="#d9d9db" stroke-width="3" fill="none"/>
<path d="M1489.01 867.00 A18 18 0 0 1 1490.89 867.13" stroke="#1d4a92" stroke-width="3" fill="none" stroke-linecap="round"/>
<text x="1488.7" y="891.5" text-anchor="middle" font-family="Liberation Sans" font-size="15" font-weight="700" fill="#1d4a92" letter-spacing="-0.3">27</text>
<circle cx="1581" cy="885" r="18" stroke="#d9d9db" stroke-width="3" fill="none"/>
<path d="M1581.31 867.00 A18 18 0 0 1 1583.82 867.22" stroke="#1d4a92" stroke-width="3" fill="none" stroke-linecap="round"/>
<text x="1581" y="891.5" text-anchor="middle" font-family="Liberation Sans" font-size="15" font-weight="700" fill="#1d4a92" letter-spacing="-0.3">28</text>
<circle cx="1674" cy="885" r="18" stroke="#d9d9db" stroke-width="3" fill="none"/>
<path d="M1674.31 867.00 A18 18 0 0 1 1678.66 867.61" stroke="#1d4a92" stroke-width="3" fill="none" stroke-linecap="round"/>
<text x="1674" y="891.5" text-anchor="middle" font-family="Liberation Sans" font-size="15" font-weight="700" fill="#1d4a92" letter-spacing="-0.3">29</text>
<circle cx="1767" cy="885" r="18" stroke="#d9d9db" stroke-width="3" fill="none"/>
<path d="M1767.31 867.00 A18 18 0 0 1 1771.66 867.61" stroke="#1d4a92" stroke-width="3" fill="none" stroke-linecap="round"/>
<text x="1767" y="891.5" text-anchor="middle" font-family="Liberation Sans" font-size="15" font-weight="700" fill="#1d4a92" letter-spacing="-0.3">30</text>
<circle cx="1859" cy="885" r="18" stroke="#d9d9db" stroke-width="3" fill="none"/>
<path d="M1859.31 867.00 A18 18 0 0 1 1863.66 867.61" stroke="#1d4a92" stroke-width="3" fill="none" stroke-linecap="round"/>
<text x="1859" y="891.5" text-anchor="middle" font-family="Liberation Sans" font-size="15" font-weight="700" fill="#1d4a92" letter-spacing="-0.3">31</text>
</svg><div style="left:246px;top:1003.5px;width:997px;height:120px;border-radius:10px;background:#fff;box-shadow:0 0 0 1px #efeff1"></div>
<span class="nw" style="left:255.00px;top:1014.83px;font-size:19.1px;line-height:19.1px;color:#0a0a0a;font-weight:700;letter-spacing:-0.27px;">Top Inventories</span>
<span class="nw" style="left:254.20px;top:1070.00px;font-size:13px;line-height:13px;color:#3b3d42;">Inventory</span>
<span class="nw" style="left:621.80px;top:1070.00px;font-size:13px;line-height:13px;color:#3b3d42;">Category</span>
<span class="nw" style="left:916.60px;top:1070.00px;font-size:13px;line-height:13px;color:#3b3d42;">Unit</span>
<span class="nw" style="left:1080.20px;top:1070.00px;font-size:13px;line-height:13px;color:#3b3d42;">Value</span>
<span class="nw" style="right:685.00px;top:1070.00px;font-size:13px;line-height:13px;color:#3b3d42;">Growth</span>
<div style="left:1249px;top:1003.5px;width:664.5px;height:120px;border-radius:10px;background:#fff;box-shadow:0 0 0 1px #efeff1"></div>
<span class="nw" style="left:1258.60px;top:1014.83px;font-size:19.1px;line-height:19.1px;color:#0a0a0a;font-weight:700;letter-spacing:-0.16px;">Top Categories</span>
<div style="left:1257px;top:1066px;width:9px;height:9px;border-radius:50%;background:#42a5f5"></div>
<span class="nw" style="left:1271.60px;top:1063.14px;font-size:14.6px;line-height:14.6px;color:#1a1a1a;letter-spacing:-0.3px;">Men's Clothing</span>
<span class="nw" style="right:15.00px;top:1063.23px;font-size:14.5px;line-height:14.5px;color:#000;font-weight:700;"><svg style="position:static;display:inline-block;vertical-align:baseline;margin-left:0px;margin-right:0.5px;overflow:visible" width="7.32" height="9.77" viewBox="0 0 15 20"><path d="M0.6 1.4 Q3.9 1.2 3.9 5 L3.9 13.5 Q3.9 18.6 8.2 18.6 Q13.4 18.6 13.4 11.5 Q13.4 7 10.6 7 Q9.2 7 8.4 8.3 M0.4 7.8 L6.8 7.8" stroke="#000" stroke-width="2.3" fill="none"/></svg>184K</span>
<svg style="left:1906px;top:1066px" width="14" height="14" viewBox="0 0 14 14"><path d="M14 0 L14 14 L0 14 Q14 14 14 0Z" fill="#2a2190"/></svg>
<svg style="left:0;top:1066px" width="14" height="14" viewBox="0 0 14 14"><path d="M0 0 L0 14 L14 14 Q0 14 0 0Z" fill="#2a2190"/></svg>
</div>
</body></html>
